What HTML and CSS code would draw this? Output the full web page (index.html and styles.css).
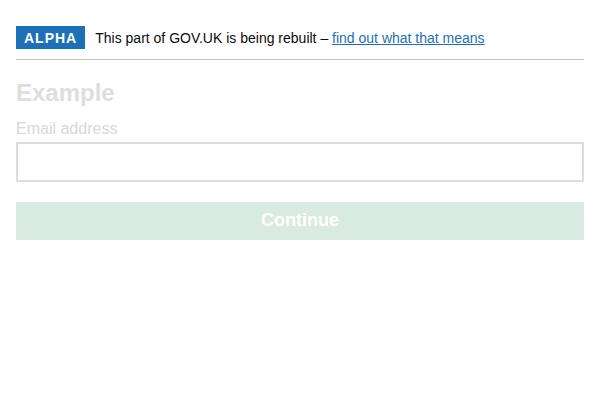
FILE: index.html
```html
<!DOCTYPE html>
<html lang="en">
<head>
<meta charset="utf-8">
<link rel="stylesheet" href="styles.css">
</head>
<body>
<div class="page">
  <div class="banner">
    <strong class="tag">Alpha</strong>
    <span class="banner-text">This part of GOV.UK is being rebuilt – <a href="#" class="link">find out what that means</a></span>
  </div>
  <div class="form">
    <h1 class="heading">Example</h1>
    <label class="label" for="email">Email address</label>
    <input class="input" id="email" type="text">
    <button class="button" type="button">Continue</button>
  </div>
</div>
</body>
</html>
```
FILE: styles.css
```css
* { box-sizing: border-box; }
html, body { margin: 0; padding: 0; background: #fff; }
body { font-family: "Liberation Sans", Arial, sans-serif; color: #0b0c0c; }
.page { padding: 16px 16px 0; }
.banner {
  display: flex;
  align-items: center;
  padding: 10px 0 10px;
  border-bottom: 1px solid #c4c4c4;
}
.tag {
  display: inline-block;
  background: #1d70b8;
  color: #fff;
  font-size: 14px;
  font-weight: 700;
  line-height: 20px;
  letter-spacing: 1px;
  text-transform: uppercase;
  padding: 2px 8px 1px;
  margin-right: 10px;
}
.banner-text { font-size: 14px; line-height: 20px; }
.link { color: #1d70b8; text-decoration: underline; }
.form { display: flex; flex-direction: column; padding-top: 18px; }
.heading {
  margin: 0 0 11px;
  font-size: 24px;
  line-height: 30px;
  font-weight: 700;
  color: #dedede;
}
.label { font-size: 16px; line-height: 20px; color: #d8d8d8; margin-bottom: 3px; }
.input {
  height: 40px;
  border: 2px solid #dcdcdc;
  width: 100%;
  margin: 0 0 20px;
  font: inherit;
}
.button {
  height: 38px;
  border: 0;
  background: #d8eae1;
  box-shadow: 0 2px 0 #dcdcdc;
  color: #fff;
  font: 700 18px "Liberation Sans", Arial, sans-serif;
  width: 100%;
  padding: 0 0 1px;
}
```
